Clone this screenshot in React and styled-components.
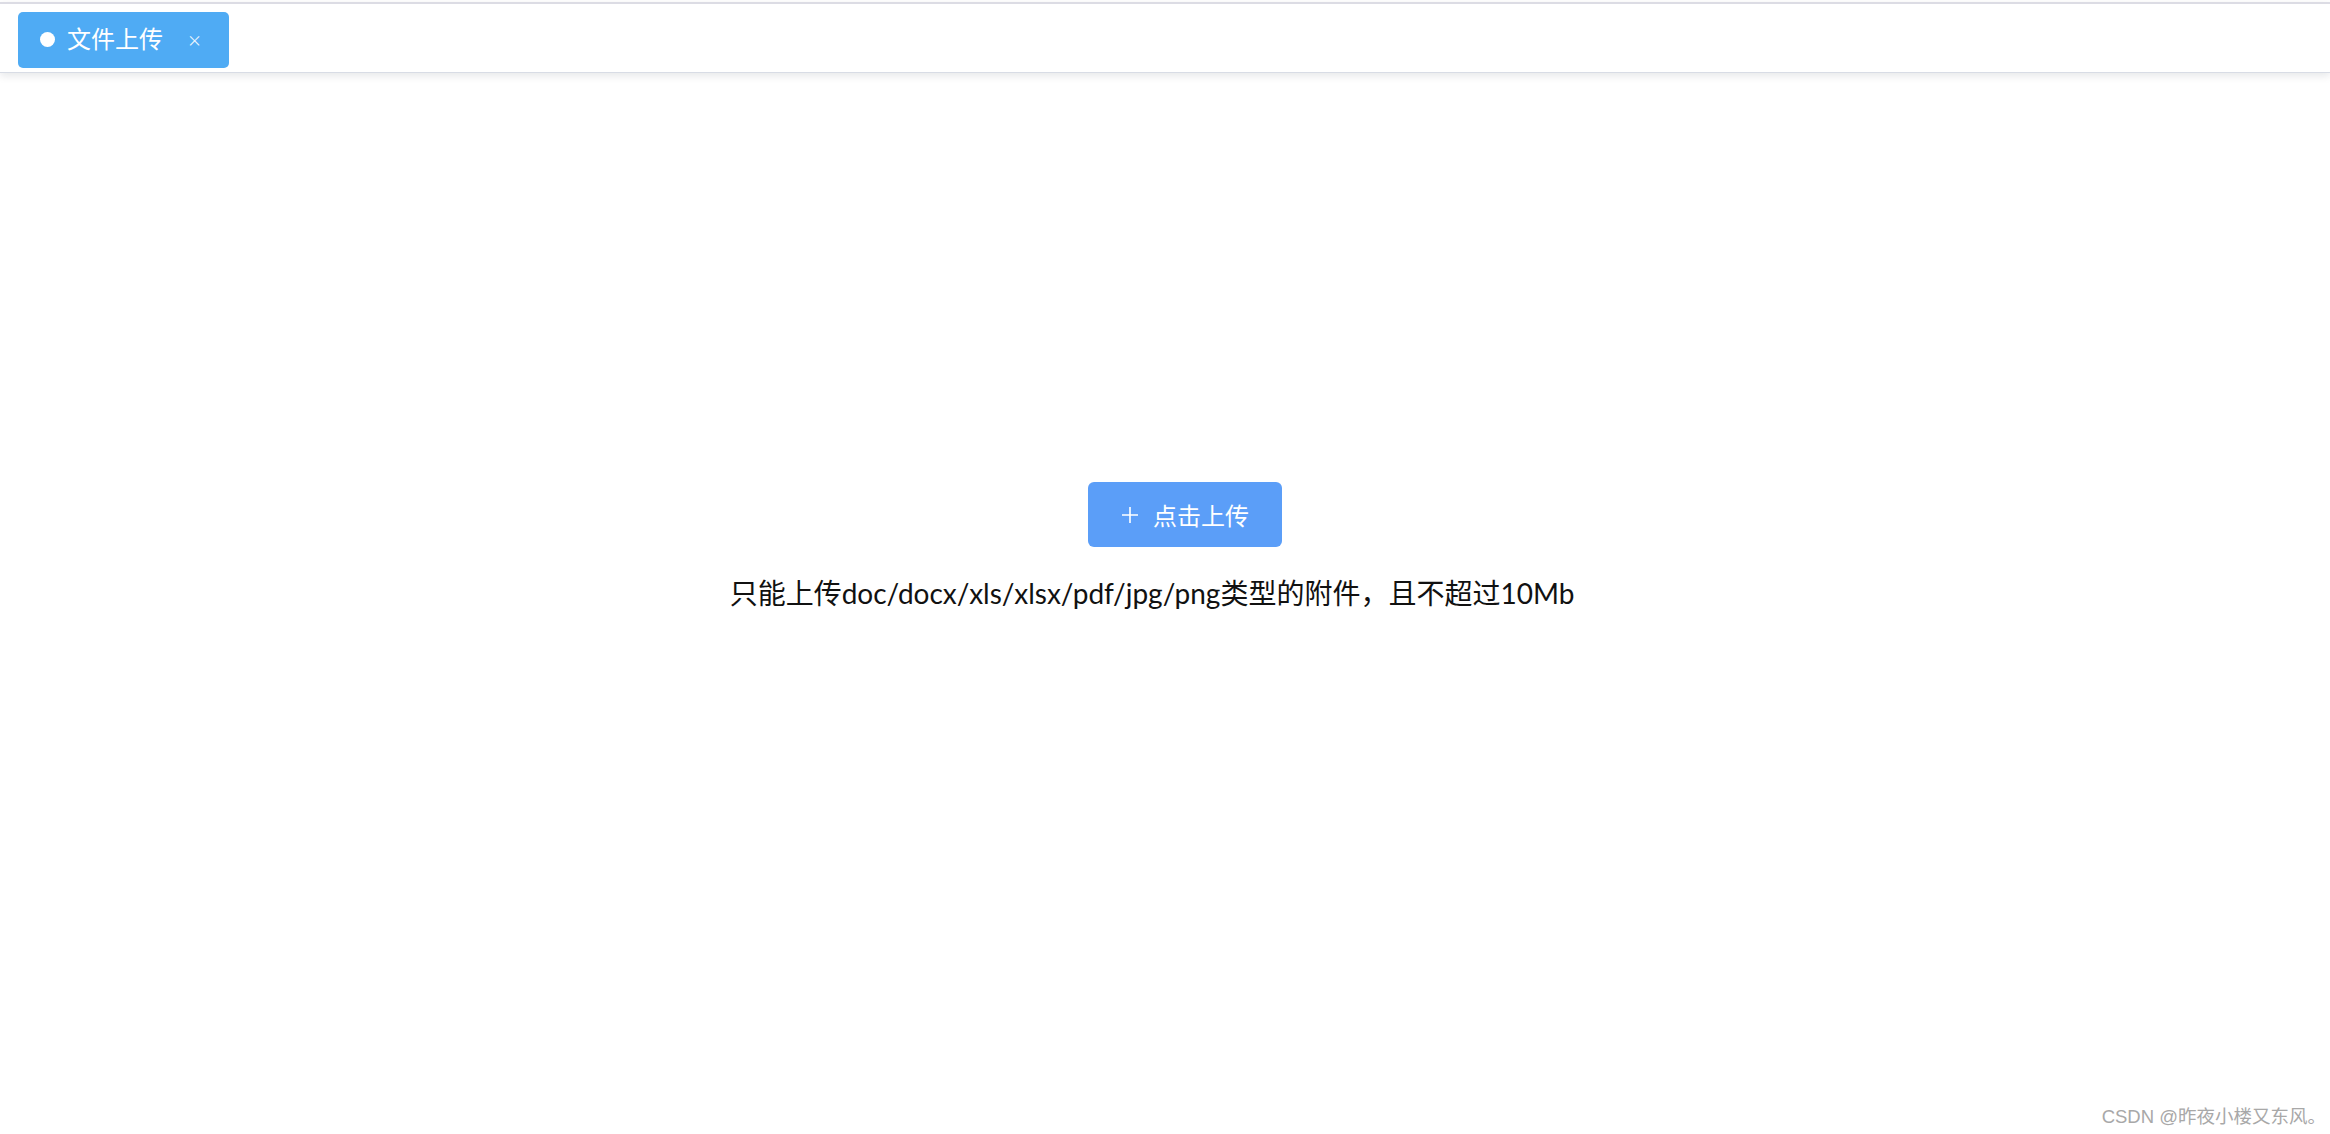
import React from "react";
import styled, { createGlobalStyle } from "styled-components";

const GlobalStyle = createGlobalStyle`
  html, body {
    margin: 0;
    padding: 0;
    background: #fff;
    font-family: Lato, "Noto Sans CJK SC", sans-serif;
  }
`;

const Page = styled.div`
  position: relative;
  height: 1134px;
  overflow: hidden;
`;

const TagsBar = styled.div`
  margin-top: 2px;
  height: 71px;
  box-sizing: border-box;
  padding: 8px 18px 0;
  border-top: 2px solid #dcdce4;
  border-bottom: 1px solid #d8dce5;
  box-shadow: 0 3px 8px rgba(0, 21, 41, 0.1);
  display: flex;
  align-items: flex-start;
`;

const Tag = styled.div`
  height: 56px;
  width: 211px;
  box-sizing: border-box;
  padding: 0 22px 4px;
  border-radius: 5px;
  background: ${(p) => (p.active ? "#4fabf4" : "#fff")};
  color: ${(p) => (p.active ? "#fff" : "#495060")};
  display: flex;
  align-items: center;
  font-size: 24px;
  line-height: 1;
  font-family: "Noto Sans CJK SC", sans-serif;

  .dot {
    width: 15px;
    height: 15px;
    border-radius: 50%;
    background: #fff;
    margin-right: 12px;
    margin-top: 3px;
  }
  .close {
    margin-left: 24px;
    font-size: 15px;
    margin-top: 3px;
    opacity: 0.9;
  }
`;

const Main = styled.div`
  padding-top: 409px;
  display: flex;
  flex-direction: column;
  align-items: center;
`;

const UploadButton = styled.button`
  margin-left: 40px;
  width: 194px;
  height: 65px;
  border: none;
  border-radius: 6px;
  background: #5b9ef8;
  color: #fff;
  font-size: 24px;
  font-family: "Noto Sans CJK SC", sans-serif;
  display: flex;
  align-items: center;
  justify-content: center;
  gap: 14px;
  cursor: pointer;
  padding: 0;

  svg {
    margin-top: 1px;
  }
`;

const Tip = styled.div`
  margin-top: 28px;
  margin-right: 26px;
  font-size: 28px;
  line-height: 36px;
  color: #111;
  font-family: Lato, "Noto Sans CJK SC", sans-serif;
`;

const Watermark = styled.div`
  position: absolute;
  right: 4px;
  bottom: 6px;
  font-size: 18.5px;
  color: #a8a8a8;
  font-family: "Liberation Sans", "Noto Sans CJK SC", sans-serif;
`;

function PlusIcon() {
  return (
    <svg width="18" height="18" viewBox="0 0 18 18" fill="none">
      <path d="M9 1v16M1 9h16" stroke="#fff" strokeWidth="1.6" />
    </svg>
  );
}

export default function App() {
  return (
    <Page>
      <GlobalStyle />
      <TagsBar>
        <Tag active>
          <span className="dot" />
          文件上传
          <span className="close">×</span>
        </Tag>
      </TagsBar>
      <Main>
        <UploadButton>
          <PlusIcon />
          点击上传
        </UploadButton>
        <Tip>只能上传doc/docx/xls/xlsx/pdf/jpg/png类型的附件，且不超过10Mb</Tip>
      </Main>
      <Watermark>CSDN @昨夜小楼又东风。</Watermark>
    </Page>
  );
}
